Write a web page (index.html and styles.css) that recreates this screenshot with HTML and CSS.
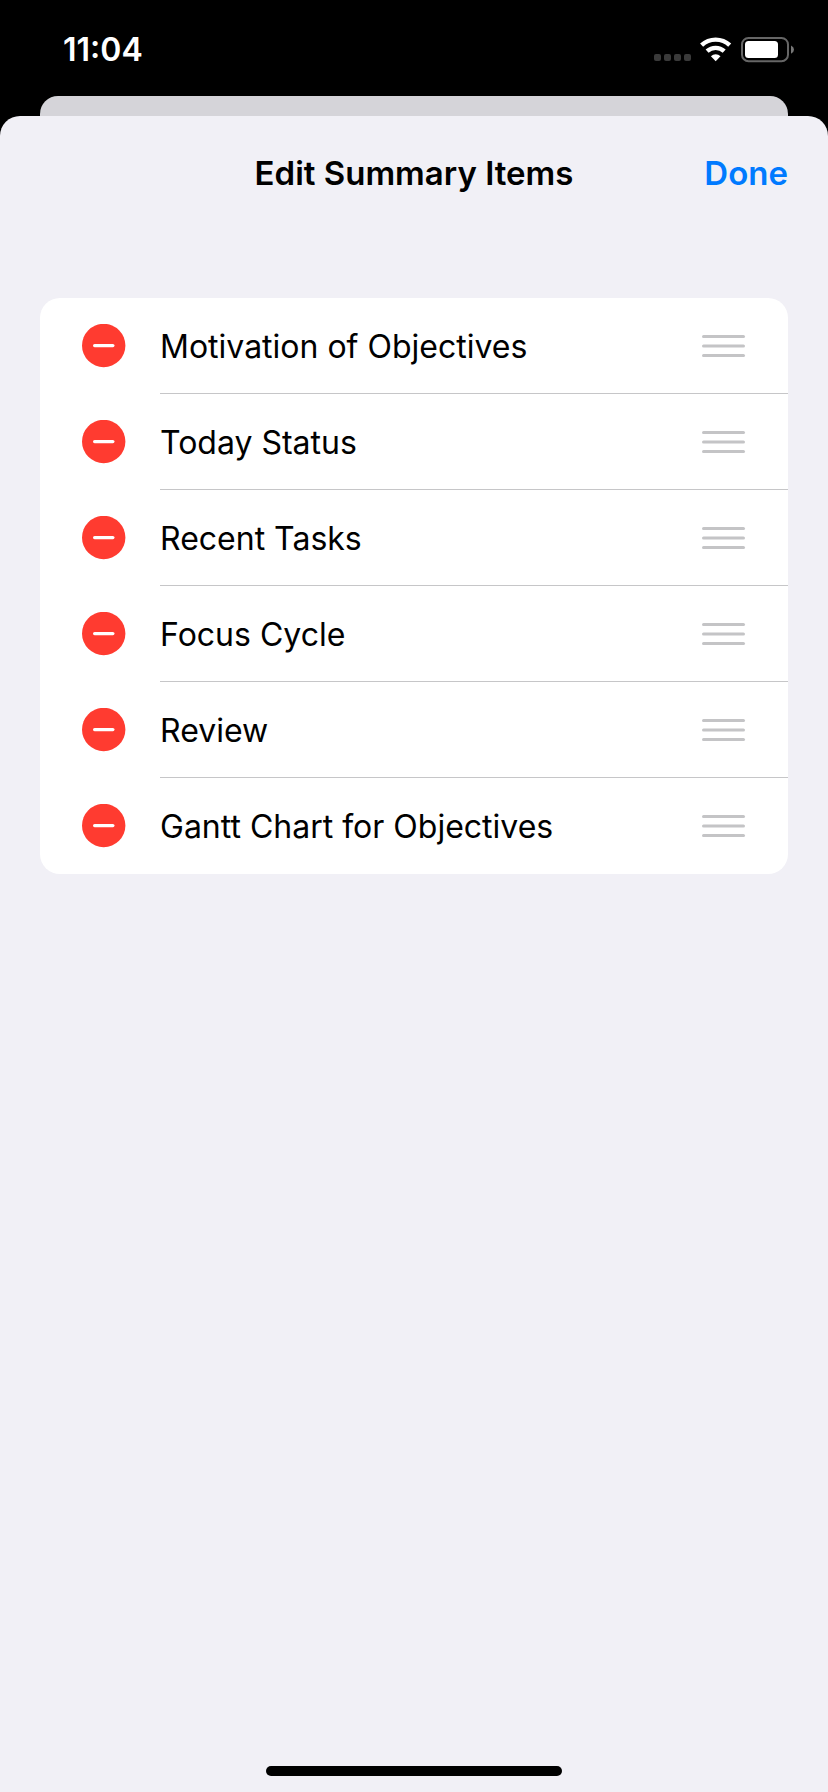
FILE: index.html
```html
<!DOCTYPE html>
<html lang="en">
<head>
<meta charset="utf-8">
<meta name="viewport" content="width=device-width, initial-scale=1">
<title>Edit Summary Items</title>
<link rel="stylesheet" href="styles.css">
</head>
<body>
<svg class="defs" aria-hidden="true">
  <symbol id="minus" viewBox="0 0 44 44">
    <circle cx="21.7" cy="21.5" r="21.7" fill="#ff3b30"/>
    <rect x="11" y="20" width="21.5" height="3.2" rx="1.6" fill="#fff"/>
  </symbol>
  <symbol id="grip" viewBox="0 0 44 24">
    <g fill="#c4c4c6">
      <rect x="0" y="1" width="43" height="3" rx="1.5"/>
      <rect x="0" y="10.5" width="43" height="3" rx="1.5"/>
      <rect x="0" y="20" width="43" height="3" rx="1.5"/>
    </g>
  </symbol>
</svg>
<div class="screen">
  <header class="status">
    <time class="clock">11:04</time>
    <div class="indicators">
      <svg class="signal" viewBox="0 0 37 26" aria-hidden="true">
        <g fill="#3a3a3a">
          <rect x="0" y="17" width="7" height="7" rx="2"/>
          <rect x="10" y="17" width="7" height="7" rx="2"/>
          <rect x="20" y="17" width="7" height="7" rx="2"/>
          <rect x="30" y="17" width="7" height="7" rx="2"/>
        </g>
      </svg>
      <svg class="wifi" viewBox="0 0 32 26" aria-hidden="true">
        <g fill="none" stroke="#fff" stroke-width="4.4">
          <path d="M1.6 8.2A20.4 20.4 0 0 1 29.7 8.2"/>
          <path d="M7.1 14.2A12.6 12.6 0 0 1 24.2 14.2"/>
        </g>
        <path d="M15.7 24.2L10.9 19.3Q13 17.2 15.7 17.2T20.5 19.3Z" fill="#fff"/>
      </svg>
      <svg class="battery" viewBox="0 0 54 26" aria-hidden="true">
        <rect x="1" y="1" width="46" height="23.2" rx="6.5" fill="none" stroke="#666" stroke-width="2"/>
        <rect x="4" y="4" width="33" height="17" rx="3.5" fill="#fff"/>
        <path d="M50 8.4Q53 9.8 53 12.6T50 16.8Z" fill="#777"/>
      </svg>
    </div>
  </header>
  <div class="backdrop"></div>
  <main class="sheet">
    <div class="navbar">
      <h1 class="title">Edit Summary Items</h1>
      <button class="done" type="button">Done</button>
    </div>
    <ul class="items">
      <li class="item">
        <button class="icon-button" type="button" aria-label="Remove Motivation of Objectives"><svg class="minus"><use href="#minus"/></svg></button>
        <div class="content"><span class="label">Motivation of Objectives</span><button class="icon-button" type="button" aria-label="Reorder Motivation of Objectives"><svg class="grip"><use href="#grip"/></svg></button></div>
      </li>
      <li class="item">
        <button class="icon-button" type="button" aria-label="Remove Today Status"><svg class="minus"><use href="#minus"/></svg></button>
        <div class="content"><span class="label">Today Status</span><button class="icon-button" type="button" aria-label="Reorder Today Status"><svg class="grip"><use href="#grip"/></svg></button></div>
      </li>
      <li class="item">
        <button class="icon-button" type="button" aria-label="Remove Recent Tasks"><svg class="minus"><use href="#minus"/></svg></button>
        <div class="content"><span class="label">Recent Tasks</span><button class="icon-button" type="button" aria-label="Reorder Recent Tasks"><svg class="grip"><use href="#grip"/></svg></button></div>
      </li>
      <li class="item">
        <button class="icon-button" type="button" aria-label="Remove Focus Cycle"><svg class="minus"><use href="#minus"/></svg></button>
        <div class="content"><span class="label">Focus Cycle</span><button class="icon-button" type="button" aria-label="Reorder Focus Cycle"><svg class="grip"><use href="#grip"/></svg></button></div>
      </li>
      <li class="item">
        <button class="icon-button" type="button" aria-label="Remove Review"><svg class="minus"><use href="#minus"/></svg></button>
        <div class="content"><span class="label">Review</span><button class="icon-button" type="button" aria-label="Reorder Review"><svg class="grip"><use href="#grip"/></svg></button></div>
      </li>
      <li class="item">
        <button class="icon-button" type="button" aria-label="Remove Gantt Chart for Objectives"><svg class="minus"><use href="#minus"/></svg></button>
        <div class="content"><span class="label">Gantt Chart for Objectives</span><button class="icon-button" type="button" aria-label="Reorder Gantt Chart for Objectives"><svg class="grip"><use href="#grip"/></svg></button></div>
      </li>
    </ul>
    <div class="home-indicator"></div>
  </main>
</div>
</body>
</html>
```
FILE: styles.css
```css
* {
  box-sizing: border-box;
}

body {
  margin: 0;
  background: #000;
  color: #000;
  font-family: Inter, "Liberation Sans", sans-serif;
  font-size: 32px;
  line-height: 40px;
}

button {
  padding: 0;
  border: 0;
  background: none;
  font: inherit;
  cursor: pointer;
}

svg {
  display: block;
}

.defs {
  position: absolute;
  width: 0;
  height: 0;
}

.screen {
  display: flex;
  flex-direction: column;
  min-height: 100vh;
}

.status {
  display: flex;
  justify-content: space-between;
  align-items: center;
  height: 96px;
  padding: 4px 33px 0 63px;
}

.clock {
  color: #fff;
  font-weight: 600;
}

.indicators {
  display: flex;
  gap: 9px;
}

.signal {
  width: 37px;
  height: 26px;
}

.wifi {
  width: 32px;
  height: 26px;
}

.battery {
  width: 54px;
  height: 26px;
}

.backdrop {
  height: 20px;
  margin: 0 40px;
  border-radius: 18px 18px 0 0;
  background: #d5d4d9;
}

.sheet {
  display: flex;
  flex: 1;
  flex-direction: column;
  padding-bottom: 16px;
  border-radius: 20px 20px 0 0;
  background: #f1f0f6;
}

.navbar {
  display: grid;
  grid-template-columns: 1fr auto 1fr;
  align-items: center;
  height: 112px;
  padding: 2px 40px 0;
  font-size: 33px;
}

.title {
  grid-column: 2;
  margin: 0;
  font-size: 33px;
  font-weight: 600;
}

.done {
  justify-self: end;
  color: #007aff;
  font-weight: 600;
}

.items {
  margin: 70px 40px 0;
  padding: 0;
  border-radius: 20px;
  background: #fff;
  list-style: none;
}

.item {
  display: flex;
  gap: 34px;
  height: 96px;
  padding-left: 42px;
}

.content {
  display: flex;
  flex: 1;
  justify-content: space-between;
  align-items: center;
  padding-right: 42px;
  border-bottom: 1px solid #c6c6c8;
}

.label {
  padding-top: 2px;
}

.item:last-child .content {
  border-bottom-color: transparent;
}

.minus {
  width: 44px;
  height: 44px;
}

.grip {
  width: 44px;
  height: 24px;
}

.home-indicator {
  align-self: center;
  width: 296px;
  height: 10px;
  margin-top: auto;
  border-radius: 5px;
  background: #000;
}
```
